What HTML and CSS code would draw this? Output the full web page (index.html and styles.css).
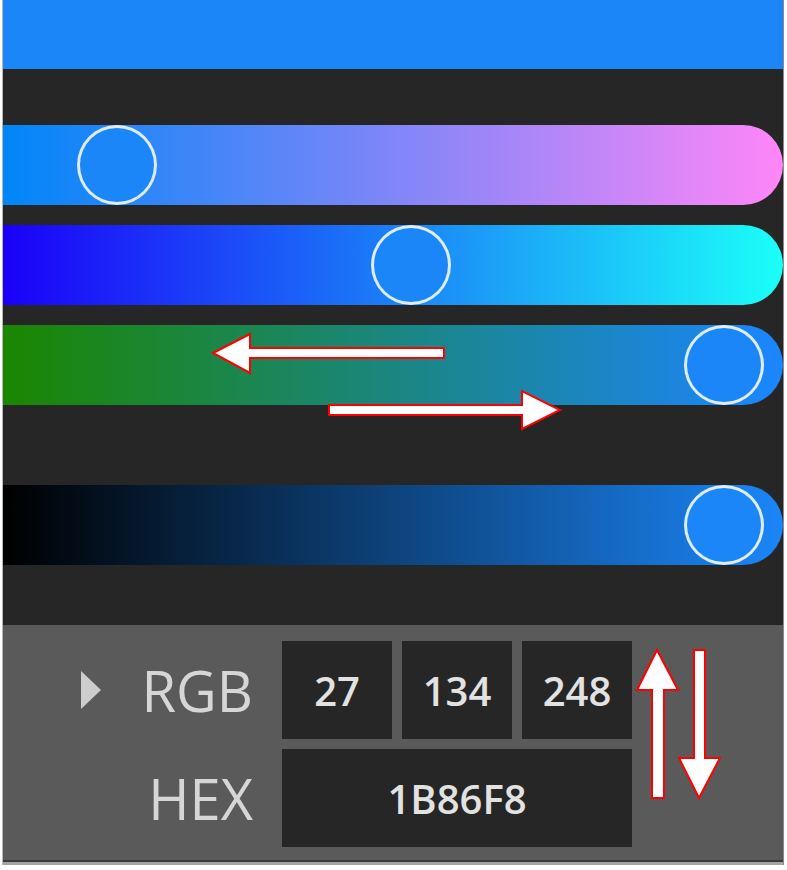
FILE: index.html
```html
<!DOCTYPE html>
<html lang="en">
<head>
    <meta charset="UTF-8">
    <meta name="viewport" content="width=device-width, initial-scale=1.0">
    <title>Color Picker</title>
    <link rel="stylesheet" href="styles.css">
</head>
<body>
    <div class="window">
        <div class="swatch"></div>

        <div class="sliders">
            <div class="track track-red">
                <div class="thumb" style="left: 74px;"></div>
            </div>
            <div class="track track-green">
                <div class="thumb" style="left: 368px;"></div>
            </div>
            <div class="track track-blue">
                <div class="thumb" style="left: 681px;"></div>
            </div>
            <div class="track track-value">
                <div class="thumb" style="left: 681px;"></div>
            </div>
        </div>

        <div class="values">
            <div class="label"><span class="expander"></span>RGB</div>
            <div class="field">27</div>
            <div class="field">134</div>
            <div class="field">248</div>
            <div class="label">HEX</div>
            <div class="field field-wide">1B86F8</div>
        </div>
        <div class="frame-bottom"></div>
    </div>

    <!-- annotation arrows drawn over the screenshot -->
    <svg class="arrows" width="787" height="870" viewBox="0 0 787 870">
        <polygon points="213,353 250,334 250,348 444,348 444,358 250,358 250,373"/>
        <polygon points="329,405 522,405 522,391 560,410 522,429 522,415 329,415"/>
        <polygon points="657,650 678,690 664,690 664,798 652,798 652,690 637,690"/>
        <polygon points="694,650 705,650 705,758 720,758 699,798 679,758 694,758"/>
    </svg>
</body>
</html>
```

FILE: styles.css
```css
body {
    margin: 0;
    padding: 0 0 0 2px;
    background-color: #fff;
    font-family: 'Open Sans', 'Noto Sans', sans-serif;
    position: relative;
    width: 787px;
    height: 870px;
    overflow: hidden;
}

.window {
    width: 780px;
    border-left: 1px solid #b8b8b8;
    border-right: 1px solid #8a8a8a;
}

.swatch {
    height: 69px;
    background-color: #1b86f8;
}

.sliders {
    background-color: #262626;
    padding: 56px 0 60px;
    display: flex;
    flex-direction: column;
    gap: 20px;
}

.track {
    position: relative;
    height: 80px;
    border-radius: 0 40px 40px 0;
}

.track-value {
    margin-top: 60px;
}

.track-red {
    background: linear-gradient(to right, rgb(0, 134, 248), rgb(255, 134, 248));
}

.track-green {
    background: linear-gradient(to right, rgb(27, 0, 248), rgb(27, 255, 248));
}

.track-blue {
    background: linear-gradient(to right, rgb(27, 134, 0), rgb(27, 134, 255));
}

.track-value {
    background: linear-gradient(to right, #000, #1b86f8);
}

.thumb {
    position: absolute;
    top: 0;
    width: 80px;
    height: 80px;
    box-sizing: border-box;
    border: 3px solid rgba(255, 255, 255, 0.85);
    border-radius: 50%;
    background-color: #1b86f8;
}

.values {
    background-color: #5a5a5a;
    padding: 16px 0 13px;
    display: grid;
    grid-template-columns: 269px 110px 110px 110px;
    grid-auto-rows: 98px;
    column-gap: 10px;
    row-gap: 10px;
}

.label {
    display: flex;
    align-items: center;
    justify-content: flex-end;
    padding-right: 19px;
    color: #d6d6d6;
    font-size: 56px;
    font-weight: 500;
}

.expander {
    width: 0;
    height: 0;
    border-top: 19px solid transparent;
    border-bottom: 19px solid transparent;
    border-left: 20px solid #cdcdcd;
    margin-right: 41px;
}

.field {
    background-color: #262626;
    color: #e2e2e2;
    font-size: 40px;
    font-weight: 600;
    display: flex;
    align-items: center;
    justify-content: center;
}

.field-wide {
    grid-column: 2 / span 3;
}

.frame-bottom {
    height: 2px;
    background-color: #3a3a3a;
    border-bottom: 3px solid #a4a4a4;
}

.arrows {
    position: absolute;
    top: 0;
    left: 0;
    pointer-events: none;
}

.arrows polygon {
    fill: #fff;
    stroke: #f00;
    stroke-width: 2;
}
```
